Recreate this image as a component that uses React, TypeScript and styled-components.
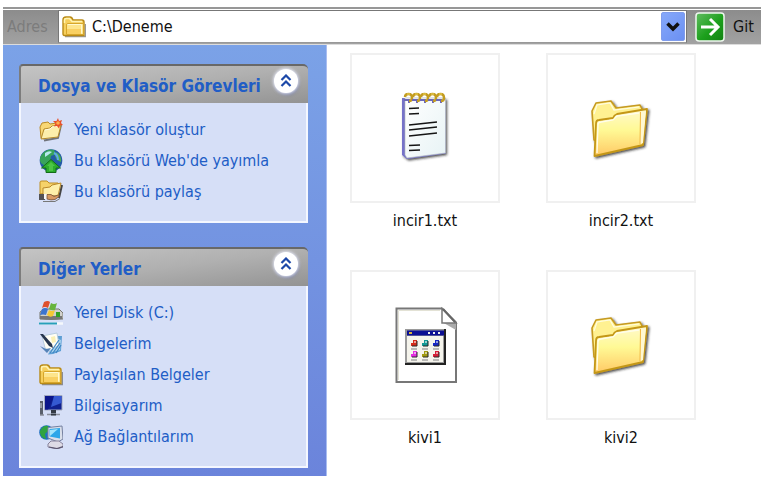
import React from "react";
import styled, { createGlobalStyle } from "styled-components";

const GlobalStyle = createGlobalStyle`
  *, *::before, *::after { box-sizing: border-box; }
  body {
    margin: 0;
    background: #fff;
    color: #111;
    font-family: "DejaVu Sans Condensed", "DejaVu Sans", sans-serif;
    font-size: 16px;
  }
  button, input { font: inherit; color: inherit; }
`;

const Window = styled.div`
  padding: 7px 12px 9px 3px;
`;

const Toolbar = styled.form`
  display: flex;
  align-items: center;
  height: 38px;
  border-top: 2px solid #979797;
  border-bottom: 1px solid #dcdcdc;
  background: linear-gradient(#fff 1px, #8c8c8c 1px, #a2a2a2);
`;

const AddressLabel = styled.label`
  width: 55px;
  padding-left: 4px;
  color: #7c7c7c;
`;

const AddressField = styled.div`
  flex: 1;
  min-width: 0;
  display: flex;
  align-items: center;
  gap: 6px;
  height: 33px;
  padding: 0 1px 0 3px;
  border: 1px solid #777;
  border-bottom-color: #999;
  background: #fff;
`;

const AddressInput = styled.input`
  flex: 1;
  min-width: 0;
  padding: 0;
  border: 0;
  outline: 0;
  background: transparent;
`;

const DropButton = styled.button`
  display: grid;
  place-items: center;
  width: 24px;
  height: 29px;
  padding: 0;
  border: 1px solid #7f9cec;
  border-radius: 2px;
  background: linear-gradient(135deg, #86a8fa, #6b90f2);
`;

const GoButton = styled.button`
  display: flex;
  align-items: center;
  gap: 8px;
  width: 74px;
  padding: 0 0 0 8px;
  border: 0;
  background: transparent;
`;

const Content = styled.div`
  display: flex;
`;

const Sidebar = styled.aside`
  flex: none;
  display: flex;
  flex-direction: column;
  gap: 24px;
  width: 324px;
  padding: 19px 18px 8px 16px;
  border-right: 1px solid #a9bdf0;
  background: linear-gradient(#7ba2e7, #6b84db);
`;

const PanelHeader = styled.header`
  display: flex;
  align-items: flex-start;
  justify-content: space-between;
  height: 39px;
  padding: 3px 10px 0 17px;
  border-top: 2px solid #686868;
  border-left: 2px solid #7c7c7c;
  border-radius: 4px 5px 0 0;
  background: linear-gradient(to bottom right, #c4c4c4, #b0b0b0 50%, #939393);
`;

const PanelTitle = styled.h2`
  margin: 0;
  color: #215dc6;
  font-size: 17px;
  font-weight: 700;
  line-height: 34px;
  white-space: nowrap;
`;

const CollapseButton = styled.button`
  display: grid;
  place-items: center;
  width: 24px;
  height: 24px;
  padding: 0;
  border: 0;
  border-radius: 50%;
  background: #fff;
  box-shadow: 0 0 3px 1px #e4e6f2, 1px 2px 3px #7078a0;
`;

const PanelList = styled.ul`
  margin: 0;
  padding: 11px 16px 14px 18px;
  border: 2px solid #f4f7ff;
  border-top: 0;
  background: #d6dff7;
  list-style: none;
`;

const PanelLink = styled.a`
  display: flex;
  align-items: center;
  gap: 11px;
  height: 31px;
  color: #215dc6;
  text-decoration: none;
  white-space: nowrap;
`;

const FileGrid = styled.main`
  flex: 1;
  display: grid;
  grid-template-columns: repeat(auto-fill, 150px);
  align-content: start;
  gap: 34px 46px;
  padding: 8px 0 0 23px;
`;

const FileButton = styled.button`
  display: flex;
  flex-direction: column;
  align-items: center;
  gap: 3px;
  padding: 0;
  border: 0;
  background: transparent;
  line-height: 30px;
`;

const Thumbnail = styled.span`
  display: grid;
  place-items: center;
  width: 150px;
  height: 150px;
  border: 2px solid #f0f0f0;
`;

const Small = ({ children }: { children: React.ReactNode }) => (
  <svg width="24" height="24" viewBox="0 0 24 24" aria-hidden="true">{children}</svg>
);

const FolderSmall = () => (
  <Small>
    <path d="M3 21.500h20.500V9" fill="none" stroke="#555" strokeOpacity=".6" strokeWidth="1.5" />
    <path d="M1 19V5q0-3 3-3h4q2 0 3 3h9q2 0 2 2v13.500H3q-2 0-2-1.500z" fill="#f6cf5c" stroke="#b98a16" strokeWidth="1.4" />
    <path d="M2.500 8V5q0-1.500 2-1.500h3L10 6.500h10" fill="none" stroke="#fff3b0" strokeWidth="1.500" />
    <path d="M4.500 19.500V10q0-1.500 1.500-1.500h15.500v11z" fill="#fde58c" stroke="#d6a62c" />
    <path d="M5.500 9.500h14v9" fill="none" stroke="#fff9cf" />
    <path d="M5 14h14v5H5z" fill="#f9d062" />
  </Small>
);

const NewFolder = () => (
  <Small>
    <path d="M5 22.500l14-2.500 3-13" stroke="#444" strokeWidth="2" strokeOpacity=".7" fill="none" />
    <path d="M1 9l2-4 6-1 2 2 7-1 1 5-14 11-3-1z" fill="#f8d774" stroke="#bb8a24" />
    <path d="M2 21l3-10 6-1 2-2 9-1-3 12z" fill="#fdeeab" stroke="#b58a2b" />
    <path d="M6 12l5-1 2-2 7-1" stroke="#fffbe0" fill="none" />
    <path d="M19 0l1 3 3-1-1 3 2 2-3 .5-1 3-2-2.500-3 .5 1.500-3L14 3l3.500 0z" fill="#e8502a" />
    <circle cx="19" cy="5" r="1.800" fill="#ffad4c" />
  </Small>
);

const WebGlobe = () => (
  <Small>
    <circle cx="12" cy="11.500" r="11.300" fill="#235ca6" />
    <path d="M4 4q5-5 11-3l2 4-5 2-1 5-5 5-4-3q-3-5 2-10z" fill="#38a35c" />
    <path d="M17 3q6 3 5 10l-4-2-2-4z" fill="#4aab50" />
    <path d="M6 4q4-3 7-1l-4 3-3 2z" fill="#b9e8ef" />
    <path d="M15 4q4 2 4 7" stroke="#5da8e8" strokeWidth="2" fill="none" />
    <path d="M12 10.500l9.500 8.500H17v4.500H7V19H2.500z" fill="#2cad2c" stroke="#146c18" />
    <path d="M12 13l4 4h-2v5h-4v-5H8z" fill="#4cc545" />
  </Small>
);

const ShareFolder = () => (
  <Small>
    <path d="M20 18l3-13" stroke="#444" strokeWidth="2" />
    <path d="M1 14V2q0-1 2-1h5l2 2h9v8z" fill="#f6d269" stroke="#bf8e22" />
    <path d="M4 15V8l7-1 2-2 9-2-3 13z" fill="#feefa9" stroke="#b9882a" />
    <path d="M0 14h6v6H0z" fill="#525256" />
    <path d="M5 14h3v5H5z" fill="#f8f8f8" />
    <path d="M8 14.500h4l3 2 4-1.500q2 0 1 1.500l-4 3q-4 1-8-.5z" fill="#d99a62" stroke="#765037" strokeWidth=".8" />
    <path d="M4 21.500h12l5-3" stroke="#777" fill="none" />
  </Small>
);

const LocalDisk = () => (
  <Small>
    <path d="M1 11l4-3h15l4 4v6H1z" fill="#d1d1cc" stroke="#77776f" />
    <path d="M1 15h22v3q-10 2-22 0z" fill="#777" />
    <path d="M17 11h4v5h-4z" fill="#31a225" />
    <path d="M5 1q4-2 6 0L9 7Q6 5 3 7z" fill="#df502c" />
    <path d="M12 2q3 2 6 0l-2 7q-3 1-6-1z" fill="#67b53d" />
    <path d="M3 8q3-2 6 0l-2 6q-3-1-6 0z" fill="#3c75cf" />
    <path d="M10 9q3 2 6 0l-2 6q-3 2-6-1z" fill="#f5c936" />
    <path d="M0 22.500h24" stroke="#f5f8fc" strokeWidth="2.500" />
    <path d="M0 22.500h18" stroke="#279fba" strokeWidth="2" />
  </Small>
);

const Documents = () => (
  <Small>
    <path d="M9 22.500L18 4l5 0-1 15-8 3z" fill="#5e9fd4" />
    <path d="M10 21L19 7l3 1-1 10z" fill="#a9d4ee" />
    <path d="M3 4l15-3 2 12-10 6-4-3z" fill="#fffef5" stroke="#b8cde0" />
    <path d="M12 5l4-1 1 6-4 1z" fill="#fbf0b4" />
    <path d="M1 2l3 0 9 10 1 4-4-2z" fill="#27364f" />
    <path d="M1 14l6 3 5-1-4 5z" fill="#5583b8" />
    <path d="M11 21l9-13M14 21l7-10M17 21l5-8" stroke="#3f86c4" strokeWidth="1.200" />
  </Small>
);

const Computer = () => (
  <Small>
    <path d="M1 7h3v14H1z" fill="#59606c" />
    <path d="M2 9v5" stroke="#d5d9e0" />
    <path d="M5.500 1.500h17.500V16H5.500z" fill="#10208f" stroke="#a3abc0" />
    <path d="M6 2h9L9 15.500H6z" fill="#0b168a" />
    <path d="M15 2h7.500v7L12 13z" fill="#3559d2" />
    <path d="M12 16h5v3h-5z" fill="#333a45" />
    <path d="M8 20.500h13M1 21h4" stroke="#8a8f9b" strokeWidth="1.500" />
    <path d="M12 20.500h5" stroke="#333a45" strokeWidth="2" />
  </Small>
);

const Network = () => (
  <Small>
    <circle cx="7.500" cy="7.500" r="7.300" fill="#1f6fc0" />
    <path d="M1 6q3-6 8-5l1 4-4 4 1 5q-5-1-6-6z" fill="#2fa340" />
    <path d="M9 2.500l14-1.500 1 13-5 3-10-4z" fill="#d9deea" stroke="#7580a0" />
    <path d="M10.500 4L21 3v10.500l-10.500-2z" fill="#2da6e9" />
    <path d="M11 5l8-1-8 7z" fill="#a3e3fb" />
    <path d="M12 16h8l4 3v3l-6 2-9-2v-3z" fill="#dedbe6" stroke="#87829b" />
    <path d="M10 22l8 1.500 6-2" stroke="#5c5670" strokeWidth="1.200" fill="none" />
  </Small>
);

const Large = ({ children }: { children: React.ReactNode }) => (
  <svg width="72" height="84" viewBox="0 0 72 84" aria-hidden="true">{children}</svg>
);

const Shadow = ({ id }: { id: string }) => (
  <filter id={id} x="-10%" y="-10%" width="130%" height="130%">
    <feDropShadow dx="1.500" dy="1.500" stdDeviation="1.200" floodColor="#222" floodOpacity=".8" />
  </filter>
);

const Notepad = () => (
  <Large>
    <defs>
      <linearGradient id="paper" x1="0" y1="0" x2="1" y2="1">
        <stop offset="0" stopColor="#fff" />
        <stop offset="1" stopColor="#e7f3f5" />
      </linearGradient>
      <Shadow id="noteShadow" />
    </defs>
    <path d="M13 12h43.500v55.500L18 73l-5-4z" fill="#7472c8" filter="url(#noteShadow)" />
    <path d="M16 12h40.500v55L18 72l-2-3z" fill="url(#paper)" stroke="#aeb6ba" strokeWidth=".6" />
    {[18, 26, 34, 42, 50].map((x) => (
      <g key={x} fill="none">
        <path d={`M${x - 3} 14h5v3`} stroke="#6d69b8" strokeWidth="2" />
        <path d={`M${x - 2} 11q0-3 3.500-3t3.500 4q0 3-3 3`} stroke="#c39c20" strokeWidth="2.500" />
        <path d={`M${x} 8h3`} stroke="#eed65a" />
      </g>
    ))}
    <path
      d="M20 22.500l10-.5M20 28l10-.5M20 39l28-3M20 44l28-3M20 50l28-3M20 59.500l11-.5M20 64.500l11-.5"
      stroke="#151515"
      strokeWidth="1.500"
    />
  </Large>
);

const FolderLarge = ({ id }: { id: string }) => (
  <Large>
    <defs>
      <linearGradient id={`${id}Front`} x1="0" y1="0" x2="0" y2="1">
        <stop offset="0" stopColor="#fff9cc" />
        <stop offset=".45" stopColor="#fff995" />
        <stop offset="1" stopColor="#ffc965" />
      </linearGradient>
      <Shadow id={`${id}Shadow`} />
    </defs>
    <g filter={`url(#${id}Shadow)`} strokeLinejoin="round">
      <path d="M9 54L7 25l4-8 15-2 5 7 24-3 2 4-1 36z" fill="#fff191" stroke="#c69a20" strokeWidth="1.600" />
      <path d="M9.500 70L11 38q0-4 3-4l14-2q1-3 4-4l30-5-4 36z" fill={`url(#${id}Front)`} stroke="#c49718" strokeWidth="1.800" />
    </g>
    <path d="M9 28l3-9 13-2 4 7 25-3" fill="none" stroke="#fffce0" strokeWidth="1.200" />
    <path d="M12 67l1-28q0-3 3-3l12-2 4-4 22-3" fill="none" stroke="#fffdeb" strokeWidth="1.300" />
    <path d="M56 26l-1 32 3-1 3-32z" fill="#fff8d2" />
    <path d="M55.500 26l-.5 32" stroke="#f2b842" />
  </Large>
);

const appDots: [number, number, string][] = [
  [22, 37, "#d52c1b"],
  [33, 37, "#139a96"],
  [44, 37, "#1828c4"],
  [22, 48, "#e52be1"],
  [33, 48, "#a19a10"],
  [44, 48, "#d51f36"],
];

const AppFile = () => (
  <Large>
    <path d="M7.500 5.500H53L67 19.500V79H7.500z" fill="#fff" stroke="#777" strokeWidth="2" />
    <path d="M9.500 77V7.500H51" fill="none" stroke="#e3e2d5" />
    <path d="M53 19l14 8v-8z" fill="#aaa" />
    <path d="M53 5.500V20h14z" fill="#fff" stroke="#777" strokeWidth="1.500" />
    <path d="M54 6l12 13" stroke="#666" strokeWidth="2" />
    <path d="M16 26h41v36H16z" fill="#222" />
    <path d="M16 26h39v34H16z" fill="#9a9a9a" />
    <path d="M18 33h36v26H18z" fill="#f5f4ec" />
    <path d="M18 27.500h37v5H18z" fill="#0b0f93" />
    <path d="M20 29h3v2h-3z" fill="#d7b63a" />
    <path d="M39 30h2M44 30h2M49 30h2" stroke="#eee" strokeWidth="2" />
    {appDots.map(([x, y, color]) => (
      <g key={`${x}-${y}`}>
        <path d={`M${x} ${y + 3}h2v-3h4v6h-6z`} fill={color} />
        <path d={`M${x + 1} ${y + 6}h5v-5`} fill="none" stroke="#262626" />
        <path d={`M${x + 3} ${y + 1}h2v2h-2z`} fill="#fff" fillOpacity=".55" />
        <path d={`M${x} ${y + 9}h6`} stroke="#a6a6a6" strokeWidth="1.500" />
      </g>
    ))}
  </Large>
);

const GoArrow = () => (
  <svg width="30" height="30" viewBox="0 0 30 30" aria-hidden="true">
    <defs>
      <linearGradient id="go" x1="0" y1="0" x2="1" y2="1">
        <stop offset="0" stopColor="#62bd62" />
        <stop offset=".55" stopColor="#1da01d" />
        <stop offset="1" stopColor="#118111" />
      </linearGradient>
    </defs>
    <rect x="1" y="1" width="28" height="28" rx="3" fill="url(#go)" stroke="#eef7ee" strokeWidth="1.500" />
    <path d="M6 15h17M15 7l8 8-8 8" fill="none" stroke="#fff" strokeWidth="3" />
  </svg>
);

const tasks = [
  { label: "Yeni klasör oluştur", icon: <NewFolder /> },
  { label: "Bu klasörü Web'de yayımla", icon: <WebGlobe /> },
  { label: "Bu klasörü paylaş", icon: <ShareFolder /> },
];

const places = [
  { label: "Yerel Disk (C:)", icon: <LocalDisk /> },
  { label: "Belgelerim", icon: <Documents /> },
  { label: "Paylaşılan Belgeler", icon: <FolderSmall /> },
  { label: "Bilgisayarım", icon: <Computer /> },
  { label: "Ağ Bağlantılarım", icon: <Network /> },
];

const files = [
  { name: "incir1.txt", icon: <Notepad /> },
  { name: "incir2.txt", icon: <FolderLarge id="incir" /> },
  { name: "kivi1", icon: <AppFile /> },
  { name: "kivi2", icon: <FolderLarge id="kivi" /> },
];

type PanelProps = { title: string; items: { label: string; icon: React.ReactNode }[] };

const Panel = ({ title, items }: PanelProps) => (
  <section>
    <PanelHeader>
      <PanelTitle>{title}</PanelTitle>
      <CollapseButton type="button" aria-label={title}>
        <svg width="12" height="14" viewBox="0 0 12 14" aria-hidden="true">
          <path d="M1.500 6L6 1.500 10.500 6M1.500 12L6 7.500l4.500 4.500" fill="none" stroke="#1c48a8" strokeWidth="2.200" />
        </svg>
      </CollapseButton>
    </PanelHeader>
    <PanelList>
      {items.map((item) => (
        <li key={item.label}>
          <PanelLink href="#">
            {item.icon}
            {item.label}
          </PanelLink>
        </li>
      ))}
    </PanelList>
  </section>
);

export default function App() {
  return (
    <>
      <GlobalStyle />
      <Window>
        <Toolbar>
          <AddressLabel htmlFor="address">Adres</AddressLabel>
          <AddressField>
            <FolderSmall />
            <AddressInput id="address" defaultValue="C:\Deneme" />
            <DropButton type="button" aria-label="Adres">
              <svg width="14" height="10" viewBox="0 0 14 10" aria-hidden="true">
                <path d="M1.500 1.500L7 7l5.500-5.500" fill="none" stroke="#111" strokeWidth="3.500" />
              </svg>
            </DropButton>
          </AddressField>
          <GoButton type="button">
            <GoArrow />
            Git
          </GoButton>
        </Toolbar>
        <Content>
          <Sidebar>
            <Panel title="Dosya ve Klasör Görevleri" items={tasks} />
            <Panel title="Diğer Yerler" items={places} />
          </Sidebar>
          <FileGrid>
            {files.map((file) => (
              <FileButton key={file.name} type="button">
                <Thumbnail>{file.icon}</Thumbnail>
                {file.name}
              </FileButton>
            ))}
          </FileGrid>
        </Content>
      </Window>
    </>
  );
}
